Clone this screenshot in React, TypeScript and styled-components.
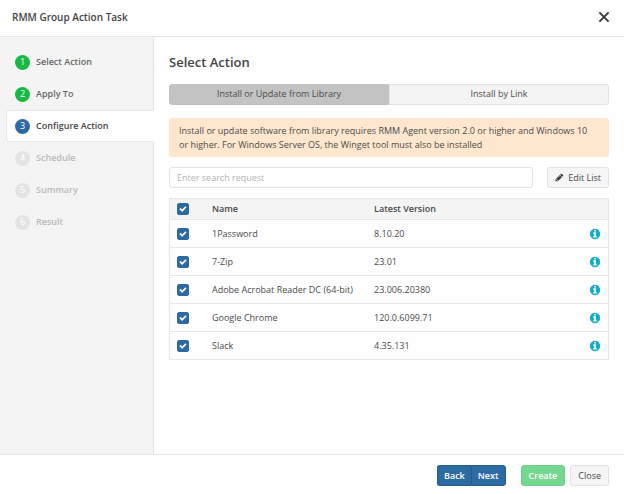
import React, { useState } from "react";
import styled, { createGlobalStyle, css } from "styled-components";

const GlobalStyle = createGlobalStyle`
  *, *::before, *::after { box-sizing: border-box; }
  body {
    margin: 0;
    background: #fefefe;
    color: #4a4a4a;
    font: 9px/14px "Open Sans", "Noto Sans", sans-serif;
  }
  button, input { font: inherit; color: inherit; }
`;

const Dialog = styled.div`
  display: flex;
  flex-direction: column;
  min-height: 100vh;
`;

const Header = styled.header`
  display: flex;
  align-items: center;
  justify-content: space-between;
  height: 37px;
  padding: 0 14px 2px 12px;
  border-bottom: 1px solid #e6e6e6;
`;

const Heading = styled.h1`
  margin: 0;
  font-size: 10px;
  font-weight: 600;
  color: #444;
`;

const DismissButton = styled.button`
  display: flex;
  padding: 0;
  border: 0;
  background: none;
  color: #3c3c3c;
  cursor: pointer;
`;

const Body = styled.div`
  display: flex;
  flex: 1;
`;

const Sidebar = styled.nav`
  flex: 0 0 154px;
  padding: 9px 0 0 6px;
  background: #f4f4f4;
  box-shadow: inset -1px 0 #e4e4e4;
`;

const Steps = styled.ol`
  display: flex;
  flex-direction: column;
  margin: 0;
  padding: 0;
  list-style: none;
`;

type StepState = "done" | "active" | "pending";

const Step = styled.li<{ $state: StepState }>`
  display: flex;
  align-items: center;
  gap: 6px;
  height: 32px;
  padding-left: 8px;
  border: 1px solid transparent;
  border-right: 0;
  border-radius: 4px 0 0 4px;
  font-weight: 600;
  color: ${(p) => (p.$state === "pending" ? "#b9b9b9" : p.$state === "done" ? "#666" : "#444")};
  ${(p) =>
    p.$state === "active" &&
    css`
      background: #fefefe;
      border-color: #e8e8e8;
    `}
`;

const stepColors: Record<StepState, string> = {
  done: "#17b944",
  active: "#2c6aa3",
  pending: "#e3e3e3",
};

const StepNumber = styled.span<{ $state: StepState }>`
  display: grid;
  place-items: center;
  width: 15px;
  height: 15px;
  border-radius: 50%;
  background: ${(p) => stepColors[p.$state]};
  color: #fff;
  font-weight: 400;
`;

const Content = styled.main`
  flex: 1;
  min-width: 0;
  padding: 16px 15px;
`;

const Title = styled.h2`
  margin: 0 0 13px;
  font-size: 13px;
  line-height: 18px;
  font-weight: 600;
  color: #444;
`;

const Tabs = styled.div`
  display: grid;
  grid-template-columns: 1fr 1fr;
  margin-bottom: 13px;
`;

const Tab = styled.button<{ $selected: boolean }>`
  height: 21px;
  padding: 0 0 2px;
  border: 1px solid ${(p) => (p.$selected ? "#c1c1c1" : "#e2e2e2")};
  background: ${(p) => (p.$selected ? "#c3c3c3" : "#f4f4f4")};
  cursor: pointer;
  &:first-child { border-radius: 3px 0 0 3px; }
  &:last-child { border-radius: 0 3px 3px 0; }
`;

const Notice = styled.p`
  margin: 0 0 10px;
  padding: 6px 10px 5px;
  border-radius: 3px;
  background: #ffe7cf;
`;

const SearchRow = styled.div`
  display: flex;
  gap: 14px;
  margin-bottom: 10px;
`;

const SearchInput = styled.input`
  flex: 1;
  min-width: 0;
  height: 21px;
  padding: 0 7px;
  border: 1px solid #e2e2e2;
  border-radius: 3px;
  background: #fff;
  &::placeholder { color: #b3b3b3; opacity: 1; }
`;

type Tone = "plain" | "primary" | "success";

const tones = {
  plain: css`background: #f5f5f5; border-color: #e2e2e2; color: #4a4a4a;`,
  primary: css`background: #2c6aa3; border-color: #245a8c; color: #fff;`,
  success: css`background: #75d891; border-color: #6dce89; color: #fff;`,
};

const Button = styled.button<{ $tone?: Tone }>`
  display: inline-flex;
  align-items: center;
  justify-content: center;
  gap: 4px;
  height: 21px;
  padding: 0 7px;
  border: 1px solid;
  border-radius: 3px;
  white-space: nowrap;
  cursor: pointer;
  ${(p) => tones[p.$tone ?? "plain"]}
  font-weight: ${(p) => (p.$tone ? 600 : 400)};
`;

const ButtonGroup = styled.div`
  display: flex;
  ${Button} { padding: 0 6px; }
  ${Button}:first-child { border-radius: 3px 0 0 3px; border-right: 0; }
  ${Button}:last-child { border-radius: 0 3px 3px 0; }
`;

const Table = styled.table`
  width: 100%;
  border: 1px solid #e6e6e6;
  border-spacing: 0;
  table-layout: fixed;
`;

const cell = css`
  padding: 0 0 0 7px;
  text-align: left;
  vertical-align: middle;
`;

const HeadCell = styled.th<{ $width?: string }>`
  ${cell}
  width: ${(p) => p.$width ?? "auto"};
  height: 20px;
  background: #f4f4f4;
  font-weight: 600;
`;

const Cell = styled.td`
  ${cell}
  height: 28px;
  border-top: 1px solid #e6e6e6;
`;

const CheckFrame = styled.label`
  display: grid;
  width: 12px;
  height: 12px;
  > * { grid-area: 1 / 1; }
  > svg { place-self: center; pointer-events: none; z-index: 1; }
`;

const CheckInput = styled.input`
  appearance: none;
  width: 12px;
  height: 12px;
  margin: 0;
  border: 1px solid #2c6aa3;
  border-radius: 2px;
  background: #fff;
  &:checked { background: #2c6aa3; }
`;

const InfoButton = styled.button`
  display: flex;
  padding: 0;
  border: 0;
  background: none;
  color: #12acc4;
  cursor: pointer;
`;

const Footer = styled.footer`
  display: flex;
  justify-content: flex-end;
  height: 40px;
  padding: 10px 15px 0;
  gap: 5px;
  border-top: 1px solid #e8e8e8;
  ${ButtonGroup} { margin-right: 10px; }
`;

const paths = {
  pencil:
    "M491 1536l91-91-235-235-91 91v107h128v128h107zm523-928q0-22-22-22-10 0-17 7l-542 542q-7 7-7 17 0 22 22 22 10 0 17-7l542-542q7-7 7-17zm-54-192l416 416-832 832h-416v-416zm683 96q0 53-37 90l-166 166-416-416 166-165q36-38 90-38 53 0 91 38l235 234q37 39 37 91z",
  info: "M1152 1376v-160q0-14-9-23t-23-9h-96v-512q0-14-9-23t-23-9h-320q-14 0-23 9t-9 23v160q0 14 9 23t23 9h96v320h-96q-14 0-23 9t-9 23v160q0 14 9 23t23 9h448q14 0 23-9t9-23zm-128-896v-160q0-14-9-23t-23-9h-192q-14 0-23 9t-9 23v160q0 14 9 23t23 9h192q14 0 23-9t9-23zm640 416q0 209-103 385.5t-279.5 279.5-385.5 103-385.5-103-279.5-279.5-103-385.5 103-385.5 279.5-279.5 385.5-103 385.5 103 279.5 279.5 103 385.5z",
  check:
    "M1671 566q0 40-28 68l-724 724-136 136q-28 28-68 28t-68-28l-136-136-362-362q-28-28-28-68t28-68l136-136q28-28 68-28t68 28l294 295 656-657q28-28 68-28t68 28l136 136q28 28 28 68z",
};

function Glyph({ name, size, color = "currentColor" }: { name: keyof typeof paths; size: number; color?: string }) {
  return (
    <svg width={size} height={size} viewBox="0 0 1792 1792" fill={color} aria-hidden="true">
      <path d={paths[name]} />
    </svg>
  );
}

function Checkbox({ label, checked, onChange }: { label: string; checked: boolean; onChange: () => void }) {
  return (
    <CheckFrame>
      <CheckInput type="checkbox" aria-label={label} checked={checked} onChange={onChange} />
      {checked && <Glyph name="check" size={8} color="#fff" />}
    </CheckFrame>
  );
}

const steps: { label: string; state: StepState }[] = [
  { label: "Select Action", state: "done" },
  { label: "Apply To", state: "done" },
  { label: "Configure Action", state: "active" },
  { label: "Schedule", state: "pending" },
  { label: "Summary", state: "pending" },
  { label: "Result", state: "pending" },
];

const tabs = ["Install or Update from Library", "Install by Link"];

const software = [
  { name: "1Password", version: "8.10.20" },
  { name: "7-Zip", version: "23.01" },
  { name: "Adobe Acrobat Reader DC (64-bit)", version: "23.006.20380" },
  { name: "Google Chrome", version: "120.0.6099.71" },
  { name: "Slack", version: "4.35.131" },
];

export default function App() {
  const [tab, setTab] = useState(0);
  const [selected, setSelected] = useState(software.map(() => true));
  const all = selected.every(Boolean);

  return (
    <Dialog>
      <GlobalStyle />
      <Header>
        <Heading>RMM Group Action Task</Heading>
        <DismissButton aria-label="Dismiss">
          <svg width="12" height="12" viewBox="0 0 12 12" stroke="currentColor" strokeWidth="2" aria-hidden="true">
            <path d="M1.4 1.4 10.6 10.6M10.6 1.4 1.4 10.6" />
          </svg>
        </DismissButton>
      </Header>
      <Body>
        <Sidebar>
          <Steps>
            {steps.map((step, i) => (
              <Step key={step.label} $state={step.state}>
                <StepNumber $state={step.state}>{i + 1}</StepNumber>
                {step.label}
              </Step>
            ))}
          </Steps>
        </Sidebar>
        <Content>
          <Title>Select Action</Title>
          <Tabs role="tablist">
            {tabs.map((label, i) => (
              <Tab key={label} role="tab" aria-selected={tab === i} $selected={tab === i} onClick={() => setTab(i)}>
                {label}
              </Tab>
            ))}
          </Tabs>
          <Notice>
            Install or update software from library requires RMM Agent version 2.0 or higher and Windows 10
            <br />
            or higher. For Windows Server OS, the Winget tool must also be installed
          </Notice>
          <SearchRow>
            <SearchInput type="text" placeholder="Enter search request" aria-label="Search software" />
            <Button>
              <Glyph name="pencil" size={9} color="#333" />
              Edit List
            </Button>
          </SearchRow>
          <Table>
            <thead>
              <tr>
                <HeadCell $width="35px">
                  <Checkbox label="Select all" checked={all} onChange={() => setSelected(selected.map(() => !all))} />
                </HeadCell>
                <HeadCell $width="37%">Name</HeadCell>
                <HeadCell>Latest Version</HeadCell>
                <HeadCell $width="26px" />
              </tr>
            </thead>
            <tbody>
              {software.map((item, i) => (
                <tr key={item.name}>
                  <Cell>
                    <Checkbox
                      label={`Select ${item.name}`}
                      checked={selected[i]}
                      onChange={() => setSelected(selected.map((v, j) => (j === i ? !v : v)))}
                    />
                  </Cell>
                  <Cell>{item.name}</Cell>
                  <Cell>{item.version}</Cell>
                  <Cell>
                    <InfoButton aria-label={`About ${item.name}`}>
                      <Glyph name="info" size={12} />
                    </InfoButton>
                  </Cell>
                </tr>
              ))}
            </tbody>
          </Table>
        </Content>
      </Body>
      <Footer>
        <ButtonGroup>
          <Button $tone="primary">Back</Button>
          <Button $tone="primary">Next</Button>
        </ButtonGroup>
        <Button $tone="success">Create</Button>
        <Button>Close</Button>
      </Footer>
    </Dialog>
  );
}
